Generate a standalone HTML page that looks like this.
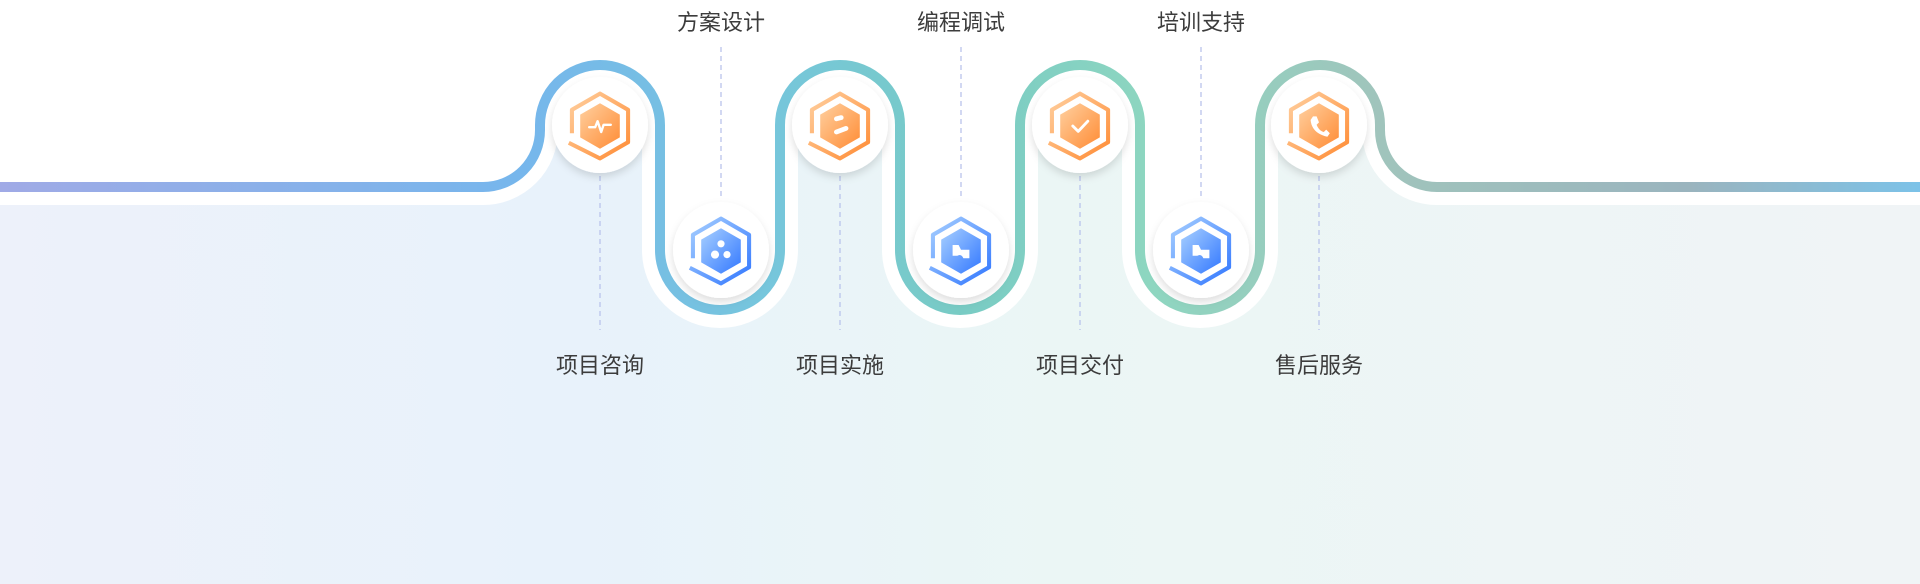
<!DOCTYPE html>
<html><head><meta charset="utf-8"><style>
html,body{margin:0;padding:0;background:#fff;width:1920px;height:584px;overflow:hidden}
svg{display:block}
text{font-family:"Liberation Sans","Noto Sans CJK SC",sans-serif;font-size:22px;fill:#3c3c3c;text-anchor:middle}
</style></head><body>
<svg width="1920" height="584" viewBox="0 0 1920 584" xmlns="http://www.w3.org/2000/svg">
<defs>
<linearGradient id="bg" x1="0" y1="0" x2="1" y2="0">
<stop offset="0" stop-color="#edf1fa"/><stop offset="0.3" stop-color="#e8f2fb"/>
<stop offset="0.55" stop-color="#ebf6f5"/><stop offset="1" stop-color="#f0f4f6"/></linearGradient>
<linearGradient id="ln" x1="0" y1="0" x2="1920" y2="0" gradientUnits="userSpaceOnUse">
<stop offset="0" stop-color="#a0aae6"/><stop offset="0.27" stop-color="#76b6ec"/>
<stop offset="0.4" stop-color="#76c6dc"/><stop offset="0.5" stop-color="#78cbc4"/>
<stop offset="0.6" stop-color="#8ed6c0"/><stop offset="0.72" stop-color="#a0c4bc"/>
<stop offset="0.88" stop-color="#9ab4be"/><stop offset="1" stop-color="#7cc2e8"/></linearGradient>
<linearGradient id="og" x1="0" y1="0" x2="1" y2="1"><stop offset="0" stop-color="#ffd0a0"/><stop offset="1" stop-color="#ff8c35"/></linearGradient>
<linearGradient id="bl" x1="0" y1="0" x2="1" y2="1"><stop offset="0" stop-color="#a8d0ff"/><stop offset="1" stop-color="#3378ff"/></linearGradient>
<filter id="sh" x="-30%" y="-30%" width="160%" height="160%"><feDropShadow dx="0" dy="4" stdDeviation="4" flood-color="#000" flood-opacity="0.13"/></filter>
<g id="hexo"><path d="M-23.4 6 V-13.5 L0 -27 L23.4 -13.5 V13.5 L0 27 L-26 14" fill="none" stroke="url(#og)" stroke-width="3.4" stroke-linejoin="round"/><polygon points="0,-19 16.5,-9.5 16.5,9.5 0,19 -16.5,9.5 -16.5,-9.5" fill="url(#og)"/></g>
<g id="hexb"><path d="M-23.4 6 V-13.5 L0 -27 L23.4 -13.5 V13.5 L0 27 L-26 14" fill="none" stroke="url(#bl)" stroke-width="3.4" stroke-linejoin="round"/><polygon points="0,-19 16.5,-9.5 16.5,9.5 0,19 -16.5,9.5 -16.5,-9.5" fill="url(#bl)"/></g>
</defs>
<path d="M0 187 H483 A57 57 0 0 0 540 130 V125 A60 60 0 0 1 660 125 V250 A60 60 0 0 0 780 250 V125 A60 60 0 0 1 900 125 V250 A60 60 0 0 0 1020 250 V125 A60 60 0 0 1 1140 125 V250 A60 60 0 0 0 1260 250 V125 A60 60 0 0 1 1380 125 V130 A57 57 0 0 0 1437 187 H1920 V584 H0 Z" fill="url(#bg)"/>
<path d="M0 187 H483 A57 57 0 0 0 540 130 V125 A60 60 0 0 1 660 125 V250 A60 60 0 0 0 780 250 V125 A60 60 0 0 1 900 125 V250 A60 60 0 0 0 1020 250 V125 A60 60 0 0 1 1140 125 V250 A60 60 0 0 0 1260 250 V125 A60 60 0 0 1 1380 125 V130 A57 57 0 0 0 1437 187 H1920" fill="none" stroke="#fff" stroke-width="36"/>
<path d="M0 187 H483 A57 57 0 0 0 540 130 V125 A60 60 0 0 1 660 125 V250 A60 60 0 0 0 780 250 V125 A60 60 0 0 1 900 125 V250 A60 60 0 0 0 1020 250 V125 A60 60 0 0 1 1140 125 V250 A60 60 0 0 0 1260 250 V125 A60 60 0 0 1 1380 125 V130 A57 57 0 0 0 1437 187 H1920" fill="none" stroke="url(#ln)" stroke-width="10"/>
<g stroke="#b9c4ec" stroke-width="1.3" stroke-dasharray="5 4">
<line x1="600" y1="176" x2="600" y2="330"/><line x1="840" y1="176" x2="840" y2="330"/>
<line x1="1080" y1="176" x2="1080" y2="330"/><line x1="1319" y1="176" x2="1319" y2="330"/>
<line x1="721" y1="47" x2="721" y2="198"/><line x1="961" y1="47" x2="961" y2="198"/><line x1="1201" y1="47" x2="1201" y2="198"/>
</g>
<g fill="#fff" filter="url(#sh)">
<circle cx="600" cy="125" r="48"/><circle cx="840" cy="125" r="48"/><circle cx="1080" cy="125" r="48"/><circle cx="1319" cy="125" r="48"/>
<circle cx="721" cy="250" r="48"/><circle cx="961" cy="250" r="48"/><circle cx="1201" cy="250" r="48"/>
</g>
<g transform="translate(600,126) scale(1.2)"><use href="#hexo"/><path d="M-9 1 H-4 L-2 -4 L1 5 L3 -1 H9" fill="none" stroke="#fff" stroke-width="2" stroke-linejoin="round" stroke-linecap="round"/></g>
<g transform="translate(840,126) scale(1.2)"><use href="#hexo"/><g stroke="#fff" stroke-width="4" stroke-linecap="round"><line x1="-3" y1="-6" x2="1" y2="-7"/><line x1="-3" y1="5" x2="5" y2="2"/></g></g>
<g transform="translate(1080,126) scale(1.2)"><use href="#hexo"/><path d="M-6 0 L-1.5 4.5 L6.5 -4" fill="none" stroke="#fff" stroke-width="2.4" stroke-linecap="round" stroke-linejoin="round"/></g>
<g transform="translate(1319,126) scale(1.2)"><use href="#hexo"/><path d="M-5 -8 L-2 -8 L0 -3 L-2 -1 Q0 4 4 5 L6 3 L9 6 L7 9 Q-6 6 -7 -5 Z" fill="#fff"/></g>
<g transform="translate(721,251) scale(1.2)"><use href="#hexb"/><g fill="#fff"><circle cx="0" cy="-6" r="3"/><circle cx="-5" cy="3" r="3.4"/><circle cx="5" cy="3" r="3"/></g></g>
<g transform="translate(961,251) scale(1.2)"><use href="#hexb"/><path d="M-7 -5 H-2 L0 -1 H7 V6 H2 Q0 2 -3 4 H-7 Z" fill="#fff"/></g>
<g transform="translate(1201,251) scale(1.2)"><use href="#hexb"/><path d="M-7 -5 H-2 L0 -1 H7 V6 H2 Q0 2 -3 4 H-7 Z" fill="#fff"/></g>
<text x="600" y="373">项目咨询</text><text x="840" y="373">项目实施</text>
<text x="1080" y="373">项目交付</text><text x="1319" y="373">售后服务</text>
<text x="721" y="30">方案设计</text><text x="961" y="30">编程调试</text><text x="1201" y="30">培训支持</text>
</svg>
</body></html>
